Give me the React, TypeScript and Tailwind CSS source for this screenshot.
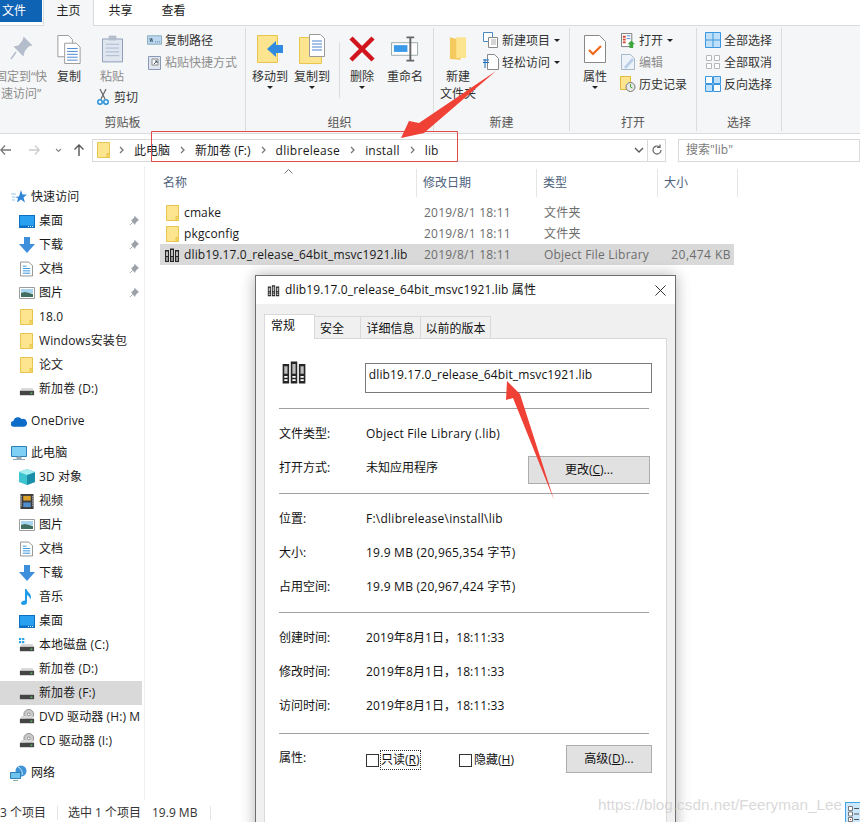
const font = { fontFamily: '"Open Sans","Noto Sans CJK SC",sans-serif' };

function Folder({ className = "w-[13px] h-[16px]" }: { className?: string }) {
  return (
    <svg viewBox="0 0 13 16" className={className}>
      <path d="M.5.5h12v15H.5z" fill="#fde48f" stroke="#e8c54e" />
      <path d="M10 15.5v-4h2.5v4z" fill="#f7d65f" stroke="#e8c54e" />
    </svg>
  );
}

function Books({ size = 16 }: { size?: number }) {
  return (
    <svg viewBox="0 0 16 16" width={size} height={size}>
      <path d="M1 3h4v12H1zM6 1.500h4V15H6zM11 3h4v12h-4z" fill="#262626" />
      <path d="M2 4.500h2V9H2zM7 3h2v6H7zM12 4.500h2V9h-2z" fill="#bdbdbd" />
      <path d="M2 11h2M7 11h2M12 11h2M2 13h2M7 13h2M12 13h2" stroke="#fff" />
    </svg>
  );
}

function Pin({ color = "#9aa0a8" }: { color?: string }) {
  return (
    <svg viewBox="0 0 12 12" className="w-[10px] h-[10px]">
      <path d="M7 .5l4.500 4.500-1.500.5-2.500 3-.5 1.500L3 5l1.500-.5 2-2.500zM4.500 7.500L1 11" fill={color} stroke={color} />
    </svg>
  );
}

function Drive({ disc = false, win = false }: { disc?: boolean; win?: boolean }) {
  return (
    <svg viewBox="0 0 18 18" className="w-[16px] h-[16px]">
      {disc && <circle cx="11" cy="6" r="5.500" fill="#c9c9c9" stroke="#8a8a8a" />}
      {disc && <circle cx="11" cy="6" r="1.500" fill="#fff" stroke="#8a8a8a" />}
      {win && <path d="M0 1h2.500v2.500H0zM3.500 1H6v2.500H3.500zM0 4.500h2.500V7H0zM3.500 4.500H6V7H3.500z" fill="#2aa4e8" />}
      <path d="M1 11l2-3h12l2 3z" fill="#d9d9d9" />
      <path d="M1 11h16v5H1z" fill="#454545" />
      <path d="M13 13h2v1.500h-2z" fill="#4fd06a" />
    </svg>
  );
}

function Desktop() {
  return (
    <svg viewBox="0 0 16 13" className="w-[16px] h-[13px]">
      <path d="M0 0h16v13H0z" fill="#0b6fc4" />
      <path d="M1 1h14v9.500H1z" fill="#2aa0f0" />
      <path d="M9 11.500h5" stroke="#fff" strokeDasharray="1 1" />
    </svg>
  );
}

function Down() {
  return (
    <svg viewBox="0 0 16 16" className="w-[16px] h-[16px]">
      <path d="M5 0h6v7h5l-8 9-8-9h5z" fill="#3d8fdc" />
    </svg>
  );
}

function Doc() {
  return (
    <svg viewBox="0 0 14 16" className="w-[13px] h-[16px]">
      <path d="M.5.5h9l4 4v11H.500z" fill="#fff" stroke="#8c8c8c" />
      <path d="M3 5h4M3 7.500h8M3 10h8M3 12.500h8" stroke="#2a8fd8" />
    </svg>
  );
}

function Pic() {
  return (
    <svg viewBox="0 0 16 12" className="w-[16px] h-[12px]">
      <path d="M.5.5h15v11H.5z" fill="#fff" stroke="#9c9c9c" />
      <path d="M2 2h12v4H2z" fill="#a9d4ee" />
      <path d="M2 6l4-1 8 2v3H2z" fill="#3f6f62" />
    </svg>
  );
}

function Video() {
  return (
    <svg viewBox="0 0 14 16" className="w-[14px] h-[15px]">
      <path d="M0 0h14v16H0z" fill="#3c3c3c" />
      <path d="M3 2h8v5H3z" fill="#d9a02b" />
      <path d="M3 9h8v5H3z" fill="#4f8fd0" />
      <path d="M1 2v12M13 2v12" stroke="#ddd" strokeDasharray="1 1" />
    </svg>
  );
}

function Music() {
  return (
    <svg viewBox="0 0 12 16" className="w-[12px] h-[16px]">
      <path d="M4 0h1.500c.5 3 4.500 4 4.500 8 0 1-.5 2-1 2.500.3-2-1.500-4-3-4.500v7.500C6 15 4.500 16 2.500 16 1 16 0 15 0 14s1.500-2.500 4-2.500z" fill="#1f9be8" />
    </svg>
  );
}

function Cube() {
  return (
    <svg viewBox="0 0 16 16" className="w-[16px] h-[16px]">
      <path d="M8 0l8 3v10l-8 3-8-3V3z" fill="#3cc4d0" />
      <path d="M8 6l8-3v10l-8 3z" fill="#1c8fa8" />
      <path d="M8 0l8 3-8 3-8-3z" fill="#a8eef0" />
    </svg>
  );
}

function Star() {
  return (
    <svg viewBox="0 0 16 16" className="w-[16px] h-[16px]">
      <path d="M10 1l1.500 4.500H16l-3.500 3 1.500 5-4-3-4 3 1-4.500-3-1 4-.5z" fill="#2f86d8" />
      <path d="M0 5h5M1 8h3M1 11h3" stroke="#9cc8ee" />
    </svg>
  );
}

function Cloud() {
  return (
    <svg viewBox="0 0 17 11" className="w-[16px] h-[11px]">
      <path d="M3 11a3 3 0 01-.5-6A5 5 0 0111.500 3 4 4 0 0114 11z" fill="#0c6cc8" />
    </svg>
  );
}

function Monitor() {
  return (
    <svg viewBox="0 0 16 15" className="w-[16px] h-[15px]">
      <path d="M.5.5h15v10H.5z" fill="#7fd0f4" stroke="#2d7fb8" />
      <path d="M6 11h4v2H6zM2 13.500h12" stroke="#9aa8b0" fill="#9aa8b0" />
    </svg>
  );
}

function Net() {
  return (
    <svg viewBox="0 0 17 16" className="w-[17px] h-[16px]">
      <circle cx="11" cy="6" r="5.500" fill="#3f94d8" />
      <path d="M8 2c3 1 5 5 4 8" stroke="#cfe8f8" fill="none" />
      <path d="M.5 7.500h10v6H.5z" fill="#6fc4ee" stroke="#2d7fb8" />
      <path d="M3 15.500h5" stroke="#8aa" />
    </svg>
  );
}

function NavRow({ icon, label, pin, active, indent = true }: { icon: React.ReactNode; label: string; pin?: boolean; active?: boolean; indent?: boolean }) {
  return (
    <div className={`h-6 flex items-center whitespace-nowrap overflow-hidden ${active ? "bg-[#d9d9d9]" : ""}`}>
      <div className={`shrink-0 flex justify-center ${indent ? "w-[17px] ml-[18px]" : "w-[17px] ml-[10px]"}`}>{icon}</div>
      <span className="ml-[4px] flex-1 overflow-hidden tracking-[0.1px]">{label}</span>
      {pin && <span className="mr-[3px] shrink-0 flex"><Pin /></span>}
    </div>
  );
}

function Sidebar() {
  return (
    <div className="w-[145px] shrink-0 border-r border-[#f0f0f0] pr-[2px] pt-[19px] text-[12px] text-[#1a1a1a]">
      <NavRow indent={false} icon={<Star />} label="快速访问" />
      <NavRow icon={<Desktop />} label="桌面" pin />
      <NavRow icon={<Down />} label="下载" pin />
      <NavRow icon={<Doc />} label="文档" pin />
      <NavRow icon={<Pic />} label="图片" pin />
      <NavRow icon={<Folder />} label="18.0" />
      <NavRow icon={<Folder />} label="Windows安装包" />
      <NavRow icon={<Folder />} label="论文" />
      <NavRow icon={<Drive />} label="新加卷 (D:)" />
      <div className="h-2" />
      <NavRow indent={false} icon={<Cloud />} label="OneDrive" />
      <div className="h-2" />
      <NavRow indent={false} icon={<Monitor />} label="此电脑" />
      <NavRow icon={<Cube />} label="3D 对象" />
      <NavRow icon={<Video />} label="视频" />
      <NavRow icon={<Pic />} label="图片" />
      <NavRow icon={<Doc />} label="文档" />
      <NavRow icon={<Down />} label="下载" />
      <NavRow icon={<Music />} label="音乐" />
      <NavRow icon={<Desktop />} label="桌面" />
      <NavRow icon={<Drive win />} label="本地磁盘 (C:)" />
      <NavRow icon={<Drive />} label="新加卷 (D:)" />
      <NavRow icon={<Drive />} label="新加卷 (F:)" active />
      <NavRow icon={<Drive disc />} label="DVD 驱动器 (H:) M" />
      <NavRow icon={<Drive disc />} label="CD 驱动器 (I:)" />
      <div className="h-2" />
      <NavRow indent={false} icon={<Net />} label="网络" />
    </div>
  );
}

function FileRow({ icon, name, type, size, active }: { icon: React.ReactNode; name: string; type: string; size?: string; active?: boolean }) {
  return (
    <div className={`h-[21px] w-[574px] flex items-center whitespace-nowrap text-[12px] ${active ? "bg-[#d9d9d9]" : ""}`}>
      <div className="w-[24px] flex justify-center shrink-0">{icon}</div>
      <span className="w-[240px] shrink-0 text-[#1a1a1a] tracking-[0.13px]">{name}</span>
      <span className="w-[120px] shrink-0 text-[#6d6d6d] tracking-[0.23px]">2019/8/1 18:11</span>
      <span className="w-[112px] shrink-0 text-[#6d6d6d] tracking-[0.22px]">{type}</span>
      <span className="w-[78px] text-right text-[#6d6d6d] pr-[3px] tracking-[0.45px]">{size}</span>
    </div>
  );
}

function Arrowhead() {
  return <span className="inline-block ml-[4px] w-0 h-0 border-x-[3px] border-x-transparent border-t-[3px] border-t-[#222] align-middle" />;
}

function Caret() {
  return <div className="w-0 h-0 mx-auto mt-[1px] border-x-[3px] border-x-transparent border-t-[3px] border-t-[#222]" />;
}

function BigBtn({ icon, lines, caret, muted, w }: { icon: React.ReactNode; lines: string[]; caret?: boolean; muted?: boolean; w: string }) {
  return (
    <div className={`${w} shrink-0 flex flex-col items-center whitespace-nowrap leading-[17px] ${muted ? "text-[#8d8d8d]" : ""}`}>
      <div className="h-[32px] flex items-center justify-center mb-[3px]">{icon}</div>
      {lines.map((l) => <div key={l}>{l}</div>)}
      {caret && <Caret />}
    </div>
  );
}

function SmallBtn({ icon, label, muted, caret }: { icon: React.ReactNode; label: string; muted?: boolean; caret?: boolean }) {
  return (
    <div className={`h-[22px] flex items-center whitespace-nowrap ${muted ? "text-[#8d8d8d]" : ""}`}>
      <span className="w-[16px] flex justify-center mr-[3px] shrink-0">{icon}</span>
      {label}
      {caret && <Arrowhead />}
    </div>
  );
}

function Group({ w, label, children, last }: { w: string; label: string; children: React.ReactNode; last?: boolean }) {
  return (
    <div className={`${w} shrink-0 flex flex-col ${last ? "" : "border-r border-[#dcdcdc]"} my-[2px]`}>
      <div className="h-[87px] shrink-0 flex overflow-hidden pt-[5px]">{children}</div>
      <div className="text-center text-[#555] leading-[16px]">{label}</div>
    </div>
  );
}

function Ribbon() {
  return (
    <div className="h-[108px] bg-[#f5f6f7] border-b border-[#dadbdc] flex text-[12px] text-[#333] leading-[17px]">
      <Group w="w-[246px]" label="剪贴板">
        <BigBtn w="w-[50px] -ml-[4px]" muted lines={["固定到“快", "速访问”"]} icon={
          <svg viewBox="0 0 22 24" className="w-[22px] h-[24px]"><path d="M14 1l7 7-3 1-4 5-1 4-8-8 4-1 4-5zM6 15l-5 7" fill="#b4bdcb" stroke="#b4bdcb" strokeWidth="1.500" /></svg>
        } />
        <BigBtn w="w-[46px]" lines={["复制"]} icon={
          <svg viewBox="0 0 24 30" className="w-[24px] h-[29px]"><path d="M.5.5h11l4 4v18H.5z" fill="#fff" stroke="#9a9a9a" /><path d="M7.500 8.500h12l4 4v17h-16z" fill="#fff" stroke="#9a9a9a" /><path d="M10 14h11M10 17h11M10 20h11M10 23h11M10 26h11" stroke="#4a86d0" /></svg>
        } />
        <div className="w-[40px] shrink-0 flex flex-col">
          <BigBtn w="w-[40px]" muted lines={["粘贴"]} icon={
            <svg viewBox="0 0 22 28" className="w-[21px] h-[28px]"><path d="M.5 3.500h21v24H.5z" fill="#dfe6f0" stroke="#8a9ab5" /><path d="M7 0h8v5H7z" fill="#b4bdcb" /><path d="M4 9h14M4 13h14M4 17h14M4 21h14" stroke="#a8b8d0" /></svg>
          } />
          <div className="h-[20px] mt-[2px] flex items-center whitespace-nowrap pl-[5px]">
            <svg viewBox="0 0 12 16" className="w-[12px] h-[16px] mr-[5px] shrink-0"><path d="M3 0l5 10M9 0L4 10" stroke="#666" strokeWidth="1.200" /><circle cx="3" cy="13" r="2.200" fill="none" stroke="#2a8fd8" strokeWidth="1.500" /><circle cx="9" cy="13" r="2.200" fill="none" stroke="#2a8fd8" strokeWidth="1.500" /></svg>
            剪切
          </div>
        </div>
        <div className="pl-[14px] -mt-[4px] flex flex-col">
          <SmallBtn label="复制路径" icon={<svg viewBox="0 0 16 10" className="w-[15px] h-[10px]"><path d="M.5.5h15v9H.5z" fill="#bcd7f0" stroke="#8ab" /><path d="M3 3l1 4 1-4 1 4M9 7h.8M11 7h.8M13 7h.8" stroke="#245" fill="none" strokeWidth=".8" /></svg>} />
          <SmallBtn muted label="粘贴快捷方式" icon={<svg viewBox="0 0 13 16" className="w-[13px] h-[16px]"><path d="M.5 2.500h12v13H.5z" fill="#dfe6f0" stroke="#8a9ab5" /><path d="M4 5h6v6H4z" fill="#fff" stroke="#888" /><path d="M6 10l3-3M7 7h2v2" stroke="#456" fill="none" /></svg>} />
        </div>
      </Group>
      <Group w="w-[188px]" label="组织">
        <BigBtn w="w-[42px] ml-[3px]" caret lines={["移动到"]} icon={
          <svg viewBox="0 0 26 28" className="w-[26px] h-[28px]"><path d="M.5.500h20v27H.5z" fill="#fde48f" stroke="#e8c54e" /><path d="M10 14l9-8v4h7v8h-7v4z" fill="#2f8ae0" /></svg>
        } />
        <BigBtn w="w-[42px]" caret lines={["复制到"]} icon={
          <svg viewBox="0 0 26 30" className="w-[26px] h-[30px]"><path d="M.5 3.500h22v26H.5z" fill="#fde48f" stroke="#e8c54e" /><path d="M10.500.5h11l4 4v18h-15z" fill="#fff" stroke="#9a9a9a" /><path d="M13 7h10M13 10h10M13 13h10M13 16h10" stroke="#4a86d0" /></svg>
        } />
        <div className="w-px h-[56px] bg-[#dcdcdc] mt-[9px] ml-[6px] shrink-0" />
        <BigBtn w="w-[42px] ml-[1px]" caret lines={["删除"]} icon={
          <svg viewBox="0 0 26 26" className="w-[26px] h-[26px]"><path d="M2 2l22 22M24 2L2 24" stroke="#d2141d" strokeWidth="4.500" /></svg>
        } />
        <BigBtn w="w-[44px]" lines={["重命名"]} icon={
          <svg viewBox="0 0 30 26" className="w-[29px] h-[26px]"><path d="M.5 6.500h27v13H.5z" fill="#fff" stroke="#9aa" /><path d="M3 9h14v7H3z" fill="#3a9ae8" /><path d="M20 1v24M16 1h8M16 25h8" stroke="#666" strokeWidth="2" /></svg>
        } />
      </Group>
      <Group w="w-[136px]" label="新建">
        <BigBtn w="w-[44px] ml-[2px]" lines={["新建", "文件夹"]} icon={
          <svg viewBox="0 0 20 28" className="w-[18px] h-[28px]"><path d="M1 1l12 3v22l-12-1z" fill="#f4c95d" /><path d="M8 1h11v23H8z" fill="#fde48f" /></svg>
        } />
        <div className="flex flex-col ml-[3px] -mt-[4px]">
          <SmallBtn caret label="新建项目" icon={<svg viewBox="0 0 16 16" className="w-[16px] h-[16px]"><path d="M.5.5h9v9h-9z" fill="#fff" stroke="#4a8ac0" /><path d="M5.500 5.500h9v10h-9z" fill="#fff" stroke="#888" /><path d="M8 8h5M8 10h5M8 12h5" stroke="#aaa" /></svg>} />
          <SmallBtn caret label="轻松访问" icon={<svg viewBox="0 0 16 16" className="w-[16px] h-[16px]"><path d="M4.500.5h7l4 4v11h-11z" fill="#fff" stroke="#888" /><path d="M0 6h6M0 8.500h6M2 5v9" stroke="#1a6fc0" /></svg>} />
        </div>
      </Group>
      <Group w="w-[127px]" label="打开">
        <BigBtn w="w-[48px] ml-[1px]" caret lines={["属性"]} icon={
          <svg viewBox="0 0 22 28" className="w-[22px] h-[28px]"><path d="M.5.500h15l6 6v21H.5z" fill="#fff" stroke="#888" /><path d="M5 15l4 4 8-8" fill="none" stroke="#ef6a1c" strokeWidth="2.200" /></svg>
        } />
        <div className="flex flex-col ml-[1px] -mt-[4px]">
          <SmallBtn caret label="打开" icon={<svg viewBox="0 0 16 16" className="w-[15px] h-[15px]"><path d="M.5.5h11v14H.5z" fill="#fff" stroke="#777" /><path d="M2 3h3v2H2zM2 6h3v2H2zM2 9h3v2H2z" fill="#d5452c" /><path d="M6 3h4M6 6h4" stroke="#4a86d0" /><path d="M11 8l4 4h-2v4h-4v-4H7z" fill="#3fa53f" /></svg>} />
          <SmallBtn muted label="编辑" icon={<svg viewBox="0 0 15 16" className="w-[15px] h-[16px]"><path d="M.5.5h9l4 4v11H.5z" fill="#eef3f9" stroke="#a8b8cc" /><path d="M3 13l8-9 2 2-8 9z" fill="#b8cfe8" /></svg>} />
          <SmallBtn label="历史记录" icon={<svg viewBox="0 0 16 16" className="w-[16px] h-[16px]"><path d="M.5.5h10v13H.5z" fill="#fde48f" stroke="#e0bb40" /><circle cx="10.500" cy="11" r="4.500" fill="#e8e8e8" stroke="#777" /><path d="M10.500 8v3l2 1" stroke="#3fa53f" fill="none" /></svg>} />
        </div>
      </Group>
      <Group w="w-[85px]" label="选择">
        <div className="flex flex-col ml-[8px] -mt-[4px]">
          <SmallBtn label="全部选择" icon={<svg viewBox="0 0 16 16" className="w-[16px] h-[16px]"><path d="M.5.5h15v15H.5zM8 .5v15M.5 8h15" fill="#bfe0f8" stroke="#3b97e0" /></svg>} />
          <SmallBtn label="全部取消" icon={<svg viewBox="0 0 16 16" className="w-[16px] h-[16px]"><path d="M1.500 1.500h5v5h-5zM9.500 1.500h5v5h-5zM1.500 9.500h5v5h-5zM9.500 9.500h5v5h-5z" fill="#fff" stroke="#b8b8b8" /></svg>} />
          <SmallBtn label="反向选择" icon={<svg viewBox="0 0 16 16" className="w-[16px] h-[16px]"><path d="M.5.500h7v7h-7zM8.500 8.500h7v7h-7z" fill="#fff" stroke="#3b97e0" /><path d="M8.500.5h7v7h-7zM.5 8.500h7v7h-7z" fill="#bfe0f8" stroke="#3b97e0" /></svg>} />
        </div>
      </Group>
    </div>
  );
}

function Sep() {
  return (
    <span className="w-[25px] shrink-0 flex justify-center">
      <svg viewBox="0 0 5 8" className="w-[5px] h-[8px]"><path d="M1 1l3 3-3 3" fill="none" stroke="#777" strokeWidth="1.300" /></svg>
    </span>
  );
}

function AddressBar() {
  return (
    <div className="h-[32px] flex items-center text-[12px] text-[#1a1a1a] whitespace-nowrap">
      <div className="w-[92px] shrink-0 flex items-center text-[#888]">
        <svg viewBox="0 0 92 16" className="w-[92px] h-[16px]">
          <path d="M1 8h10M5 3.500L.8 8 5 12.500" fill="none" stroke="#777" strokeWidth="1.300" />
          <path d="M29 8h10M35 3.500L39.200 8 35 12.500" fill="none" stroke="#ccc" strokeWidth="1.300" />
          <path d="M56 7l2.500 2.500L61 7" fill="none" stroke="#888" strokeWidth="1.100" />
          <path d="M79 14V3M74.500 7.500L79 3l4.500 4.500" fill="none" stroke="#555" strokeWidth="1.400" />
        </svg>
      </div>
      <div className="w-[574px] h-[23px] border border-[#d9d9d9] flex items-center shrink-0">
        <span className="ml-[4px] -mr-[1px] flex"><Folder className="w-[13px] h-[16px]" /></span>
        <Sep /><span className="pt-[1px]">此电脑</span><Sep /><span className="pt-[1px]">新加卷 (F:)</span><Sep /><span className="pt-[1px] tracking-[0.3px]">dlibrelease</span><Sep /><span className="pt-[1px] tracking-[0.2px]">install</span><Sep /><span className="pt-[1px] tracking-[0.2px]">lib</span>
        <div className="ml-auto w-[18px] h-full flex items-center justify-center pl-[2px]">
          <svg viewBox="0 0 10 6" className="w-[10px] h-[6px]"><path d="M1 1l4 4 4-4" fill="none" stroke="#555" strokeWidth="1.300" /></svg>
        </div>
        <div className="w-[18px] h-full border-l border-[#d9d9d9] flex items-center justify-center">
          <svg viewBox="0 0 12 12" className="w-[12px] h-[12px]"><path d="M10 6a4 4 0 11-1.500-3.100M9 .5v3H6" fill="none" stroke="#666" strokeWidth="1.200" /></svg>
        </div>
      </div>
      <div className="ml-[12px] flex-1 h-[23px] border border-[#d9d9d9] flex items-center pl-[7px] text-[#7a7a7a]">搜索"lib"</div>
    </div>
  );
}

function FileList() {
  const cols = [
    { label: "名称", w: "w-[257px]" },
    { label: "修改日期", w: "w-[120px]" },
    { label: "类型", w: "w-[121px]" },
    { label: "大小", w: "w-[80px]" },
  ];
  return (
    <div className="flex-1 relative pl-[15px] text-[12px]">
      <svg viewBox="0 0 9 5" className="absolute left-[139px] top-[3px] w-[9px] h-[5px]"><path d="M.5 4.500l4-4 4 4" fill="none" stroke="#777" /></svg>
      <div className="flex h-[36px] pt-[3px]">
        {cols.map((c, i) => (
          <div key={c.label} className={`${c.w} h-[28px] border-r border-[#e5e5e5] flex items-center text-[#4c607a] ${i ? "pl-[6px]" : "pl-[3px]"}`}>{c.label}</div>
        ))}
      </div>
      <div>
        <FileRow icon={<Folder />} name="cmake" type="文件夹" />
        <FileRow icon={<Folder />} name="pkgconfig" type="文件夹" />
        <FileRow icon={<Books />} name="dlib19.17.0_release_64bit_msvc1921.lib" type="Object File Library" size="20,474 KB" active />
      </div>
    </div>
  );
}

function Divider() {
  return <div className="h-px bg-[#a0a0a0] w-[370px]" />;
}

function InfoRow({ label, value, date }: { label: string; value: string; date?: boolean }) {
  return (
    <div className="h-[34px] flex items-center whitespace-nowrap">
      <span className="w-[87px] shrink-0">{label}</span>
      <span className={date ? "tracking-[0.1px]" : "tracking-[0.25px]"}>{value}</span>
    </div>
  );
}

function Dialog() {
  return (
    <div className="absolute left-[255px] top-[275px] w-[421px] h-[600px] bg-[#f0f0f0] border border-[#6e6e6e] shadow-[0_0_14px_rgba(0,0,0,0.3)] text-[12px] text-[#111]">
      <div className="h-[28px] bg-white flex items-center pl-[11px] whitespace-nowrap tracking-[0.13px]">
        <span className="mr-[5px] flex"><Books size={13} /></span>
        dlib19.17.0_release_64bit_msvc1921.lib 属性
        <svg viewBox="0 0 12 12" className="ml-auto mr-[9px] w-[11px] h-[11px]"><path d="M.5.5l11 11M11.500.5l-11 11" stroke="#222" /></svg>
      </div>
      <div className="flex h-[34px] items-end pl-[8px] relative top-px">
        <div className="w-[51px] h-[25px] bg-white border border-b-0 border-[#d9d9d9] pl-[6px] leading-[22px] z-10">常规</div>
        <div className="w-[46px] h-[23px] bg-[#f0f0f0] border border-l-0 border-[#d9d9d9] pl-[5px] leading-[24px]">安全</div>
        <div className="w-[60px] h-[23px] bg-[#f0f0f0] border border-l-0 border-[#d9d9d9] text-center leading-[24px]">详细信息</div>
        <div className="w-[70px] h-[23px] bg-[#f0f0f0] border border-l-0 border-[#d9d9d9] text-center leading-[24px]">以前的版本</div>
      </div>
      <div className="mx-[8px] h-[600px] bg-white border border-[#d9d9d9] px-[14px]">
        <div className="flex pt-[24px] h-[69px] items-start">
          <div className="w-[86px] pl-[2px] -mt-[4px] flex"><Books size={26} /></div>
          <div className="w-[288px] h-[30px] border border-[#7a7a7a] pl-[3px] pt-[1px] leading-[20px] whitespace-nowrap tracking-[0.13px]">dlib19.17.0_release_64bit_msvc1921.lib</div>
        </div>
        <Divider />
        <div className="pt-[8px]">
          <InfoRow label="文件类型:" value="Object File Library (.lib)" />
          <div className="h-[34px] flex items-center whitespace-nowrap">
            <span className="w-[87px] shrink-0">打开方式:</span>
            <span className="w-[162px] shrink-0">未知应用程序</span>
            <div className="w-[122px] h-[28px] mt-[4px] bg-[#e1e1e1] border border-[#adadad] flex items-center justify-center">更改(<span className="underline">C</span>)...</div>
          </div>
          <div className="h-[8px]" />
        </div>
        <Divider />
        <div className="pt-[8px] pb-[8px]">
          <InfoRow label="位置:" value="F:\dlibrelease\install\lib" />
          <InfoRow label="大小:" value="19.9 MB (20,965,354 字节)" />
          <InfoRow label="占用空间:" value="19.9 MB (20,967,424 字节)" />
        </div>
        <Divider />
        <div className="pt-[8px] pb-[10px]">
          <InfoRow date label="创建时间:" value="2019年8月1日，18:11:33" />
          <InfoRow date label="修改时间:" value="2019年8月1日，18:11:33" />
          <InfoRow date label="访问时间:" value="2019年8月1日，18:11:33" />
        </div>
        <Divider />
        <div className="flex items-start pt-[11px]">
          <span className="w-[87px] shrink-0 leading-[26px]">属性:</span>
          <div className="w-[93px] flex items-center pt-[6px]">
            <span className="w-[13px] h-[13px] border border-[#333] mr-[2px]" />
            <span className="outline-1 outline-dotted outline-[#333] leading-[18px]">只读(<span className="underline">R</span>)</span>
          </div>
          <div className="w-[107px] flex items-center pt-[6px]">
            <span className="w-[13px] h-[13px] border border-[#333] mr-[2px]" />
            <span className="leading-[18px]">隐藏(<span className="underline">H</span>)</span>
          </div>
          <div className="w-[86px] h-[28px] bg-[#e1e1e1] border border-[#adadad] flex items-center justify-center">高级(<span className="underline">D</span>)...</div>
        </div>
      </div>
    </div>
  );
}

export default function App() {
  return (
    <div style={font} className="relative w-[860px] h-[822px] overflow-hidden bg-white flex flex-col">
      <div className="h-[26px] flex items-start border-b border-[#dadbdc] text-[12px] text-[#222] shrink-0">
        <div className="w-[42px] h-[22px] bg-[#0f63b5] text-white leading-[21px] pl-[2px]">文件</div>
        <div className="w-[51px] h-[26px] ml-px bg-[#f5f6f7] border-x border-[#dadbdc] text-center leading-[22px]">主页</div>
        <div className="w-[53px] text-center leading-[22px]">共享</div>
        <div className="w-[53px] text-center leading-[22px]">查看</div>
      </div>
      <Ribbon />
      <AddressBar />
      <div className="flex flex-1 min-h-0">
        <Sidebar />
        <FileList />
      </div>
      <div className="h-[22px] shrink-0 flex items-center pt-[3px] text-[12px] text-[#333] whitespace-nowrap">
        <span className="w-[57px] overflow-hidden">3 个项目</span>
        <span className="w-px h-[14px] bg-[#e5e5e5] mr-[10px]" />
        <span className="w-[84px]">选中 1 个项目</span>
        <span className="w-[58px]">19.9 MB</span>
        <span className="w-px h-[14px] bg-[#e5e5e5]" />
      </div>
      <Dialog />
      <div className="absolute left-[845px] top-[802px] w-[15px] h-[20px] bg-[#cce8ff] border-l border-t border-[#3da5e8] pl-[2px] pt-[3px]">
        <svg viewBox="0 0 12 16" className="w-[12px] h-[16px]"><path d="M.5.5h4v4h-4zM.5 6h4v4h-4zM.5 11.500h4v4h-4z" fill="#fff" stroke="#777" /><path d="M6 2.500h5M6 8h5M6 13.500h5" stroke="#555" /><path d="M2 13h1v1H2z" fill="#d33" /></svg>
      </div>
      <svg viewBox="0 0 860 822" className="absolute inset-0 w-[860px] h-[822px] pointer-events-none">
        <path d="M151.500 131.500H457.500V161.500H151.500z" fill="none" stroke="#e04a4a" />
        <path d="M401 138L409 121 419 123 496 71 424 133z" fill="#ef4136" />
        <path d="M507 381L520 394 554 500 513 398 506 400z" fill="#ef4136" />
      </svg>
      <div className="absolute left-[598px] top-[794px] whitespace-nowrap text-[15.3px] text-[#c8c8c8]/70" style={{ fontFamily: '"Liberation Sans",sans-serif' }}>https://blog.csdn.net/Feeryman_Lee</div>
    </div>
  );
}
